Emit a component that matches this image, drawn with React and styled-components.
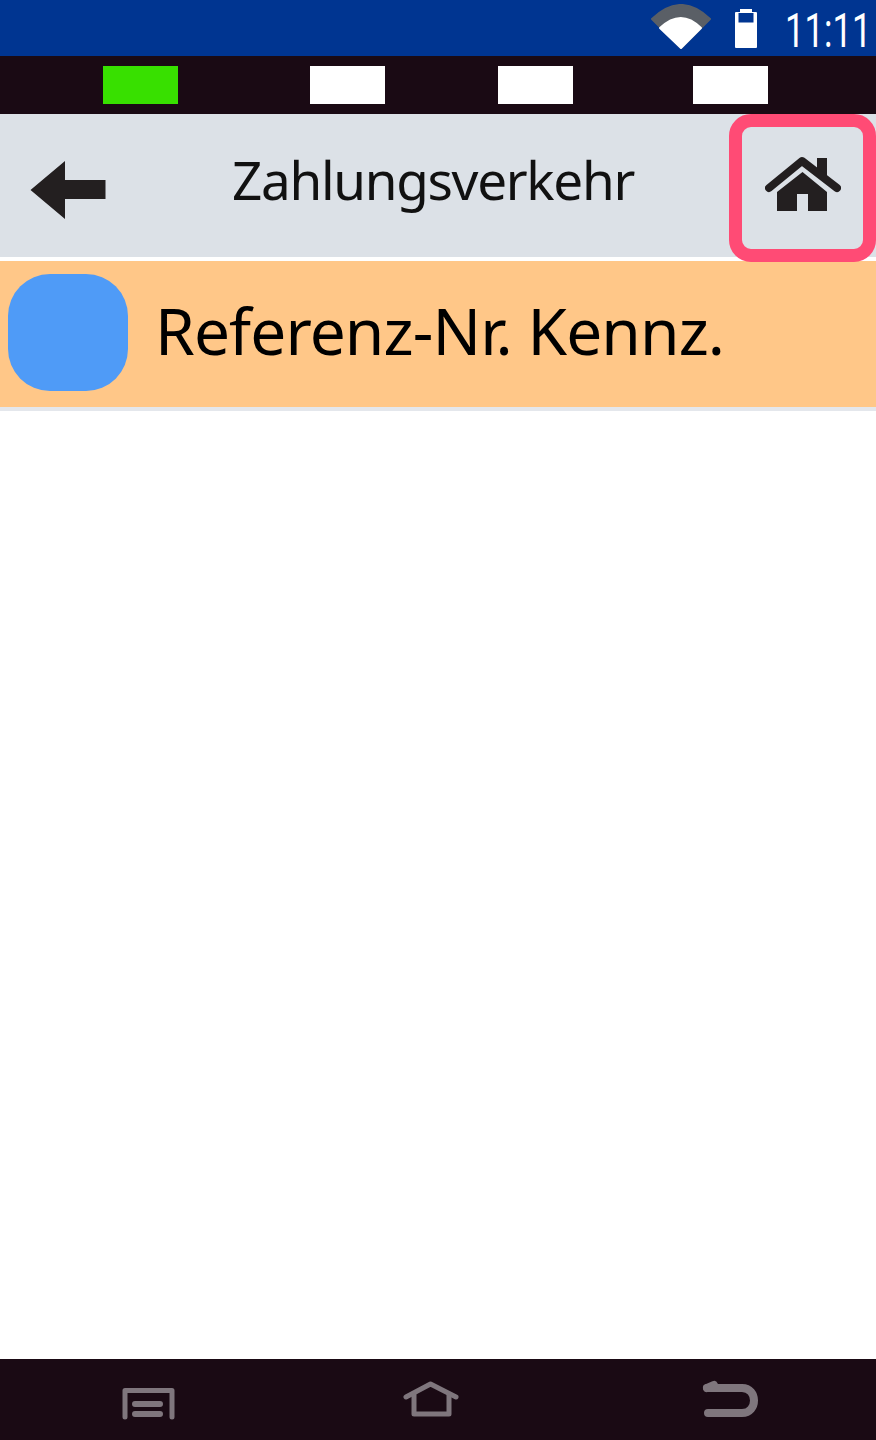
import React from 'react';
import styled, { createGlobalStyle } from 'styled-components';

const GlobalStyle = createGlobalStyle`
  html, body {
    margin: 0;
    padding: 0;
    background: #fff;
  }
`;

const Screen = styled.div`
  width: 876px;
  height: 1440px;
  display: flex;
  flex-direction: column;
  overflow: hidden;
  background: #fff;
  font-family: 'Noto Sans', 'Open Sans', sans-serif;
`;

const StatusBar = styled.div`
  height: 56px;
  flex: none;
  background: #003591;
  display: flex;
  align-items: flex-start;
  position: relative;
`;

const WifiIcon = styled.svg`
  width: 62px;
  height: 46px;
  margin: 4px 0 0 650px;
  flex: none;
`;

const BatteryIcon = styled.svg`
  width: 24px;
  height: 41px;
  margin: 8px 0 0 22px;
  flex: none;
`;

const Clock = styled.div`
  font-family: Roboto, sans-serif;
  font-weight: 400;
  font-size: 49px;
  line-height: 56px;
  color: #fff;
  margin: 3px 0 0 27px;
  transform: scaleX(0.71);
  transform-origin: left center;
  white-space: nowrap;
`;

const SignalBar = styled.div`
  height: 58px;
  flex: none;
  background: #1a0a14;
  display: flex;
  align-items: center;
  padding-left: 103px;
`;

const Step = styled.div`
  width: 75px;
  height: 38px;
  margin-left: ${props => props.$gap}px;
  background: ${props => (props.$active ? '#38e000' : '#fff')};
`;

const Header = styled.div`
  height: 143px;
  flex: none;
  background: #dce1e7;
  display: flex;
  align-items: flex-start;
`;

const BackButton = styled.svg`
  width: 76px;
  height: 58px;
  margin: 47px 0 0 30px;
  flex: none;
`;

const Title = styled.h1`
  flex: 1;
  margin: 33px 0 0;
  padding-left: 126px;
  font-size: 53px;
  line-height: 66px;
  font-weight: 400;
  letter-spacing: -1.3px;
  color: #111;
  white-space: nowrap;
`;

const HomeButton = styled.div`
  width: 147px;
  height: 148px;
  flex: none;
  box-sizing: border-box;
  border: 13px solid #ff4b75;
  border-radius: 22px;
  display: flex;
  align-items: center;
  justify-content: center;
  position: relative;
  z-index: 1;
`;

const HomeIcon = styled.svg`
  width: 76px;
  height: 56px;
  display: block;
  margin-top: -8px;
`;

const List = styled.div`
  flex: 1;
  padding-top: 4px;
`;

const Row = styled.div`
  height: 146px;
  box-sizing: border-box;
  background: #ffc788;
  display: flex;
  align-items: center;
  padding: 0 0 4px 8px;
  gap: 29px;
  box-shadow: 0 4px 0 #e4e7ec;
`;

const Badge = styled.div`
  width: 120px;
  height: 117px;
  flex: none;
  border-radius: 42px;
  background: #4f9bf7;
`;

const RowText = styled.div`
  font-size: 64px;
  line-height: 80px;
  letter-spacing: -0.9px;
  color: #000;
  white-space: nowrap;
  margin: 0 0 2px -2px;
`;

const NavBar = styled.div`
  height: 81px;
  flex: none;
  background: #1a0a14;
  display: flex;
  align-items: flex-start;
`;

const NavIcon = styled.svg`
  flex: none;
  width: ${props => props.$w}px;
  height: 40px;
  margin-left: ${props => props.$left}px;
  margin-top: 21px;
  fill: none;
  stroke: #7f767d;
  stroke-linecap: round;
  stroke-linejoin: round;
`;

export default function App() {
  return (
    <Screen>
      <GlobalStyle />
      <StatusBar>
        <WifiIcon viewBox="0 0 62 46">
          <path d="M2 15 Q31 -13 60 15 L31 44 Z" fill="#5a5f66" stroke="#5a5f66" strokeWidth="2" strokeLinejoin="round" />
          <path d="M10 24 Q31 4 51 24 L31 44 Z" fill="#fff" stroke="#fff" strokeWidth="2" strokeLinejoin="round" />
        </WifiIcon>
        <BatteryIcon viewBox="0 0 24 41">
          <rect x="6" y="1" width="12" height="4" fill="#fff" />
          <rect x="1" y="4" width="22" height="36" rx="1" fill="#fff" />
          <rect x="4.5" y="5" width="15" height="9.5" fill="#003591" />
        </BatteryIcon>
        <Clock>11:11</Clock>
      </StatusBar>

      <SignalBar>
        <Step $active $gap={0} />
        <Step $gap={132} />
        <Step $gap={113} />
        <Step $gap={120} />
      </SignalBar>

      <Header>
        <BackButton viewBox="0 0 76 58">
          <path d="M0.5 29 L35 0 V19 H75.5 V38 H35 V58 Z" fill="#231f20" />
        </BackButton>
        <Title>Zahlungsverkehr</Title>
        <HomeButton>
          <HomeIcon viewBox="0 0 76 56">
            <path d="M52 2 H62 V24 L52 16 Z" fill="#231f20" />
            <path d="M4 32 L37 5 L72 32" fill="none" stroke="#231f20" strokeWidth="8" strokeLinecap="round" strokeLinejoin="round" />
            <path d="M37.5 16 L12 36 V55 H32 V38 H43 V55 H62 V36 Z" fill="#231f20" />
          </HomeIcon>
        </HomeButton>
      </Header>

      <List>
        <Row>
          <Badge />
          <RowText>Referenz-Nr. Kennz.</RowText>
        </Row>
      </List>

      <NavBar>
        <NavIcon $w={54} $left={122} viewBox="0 0 54 40">
          <path d="M3 37 V10.5 H50 V37" strokeWidth="5" />
          <path d="M13 24 H38 M13 34 H38" strokeWidth="6" />
        </NavIcon>
        <NavIcon $w={56} $left={227} viewBox="0 0 56 40">
          <path d="M3 17 L27.5 4 L53 17" strokeWidth="5" />
          <path d="M11 15 V34 H46 V15" strokeWidth="5" />
        </NavIcon>
        <NavIcon $w={60} $left={243} viewBox="0 0 60 40">
          <path d="M5 8 H40 C56 8 56 33 40 33 H6" strokeWidth="8" />
          <path d="M5 8 L12 5" strokeWidth="8" />
        </NavIcon>
      </NavBar>
    </Screen>
  );
}
